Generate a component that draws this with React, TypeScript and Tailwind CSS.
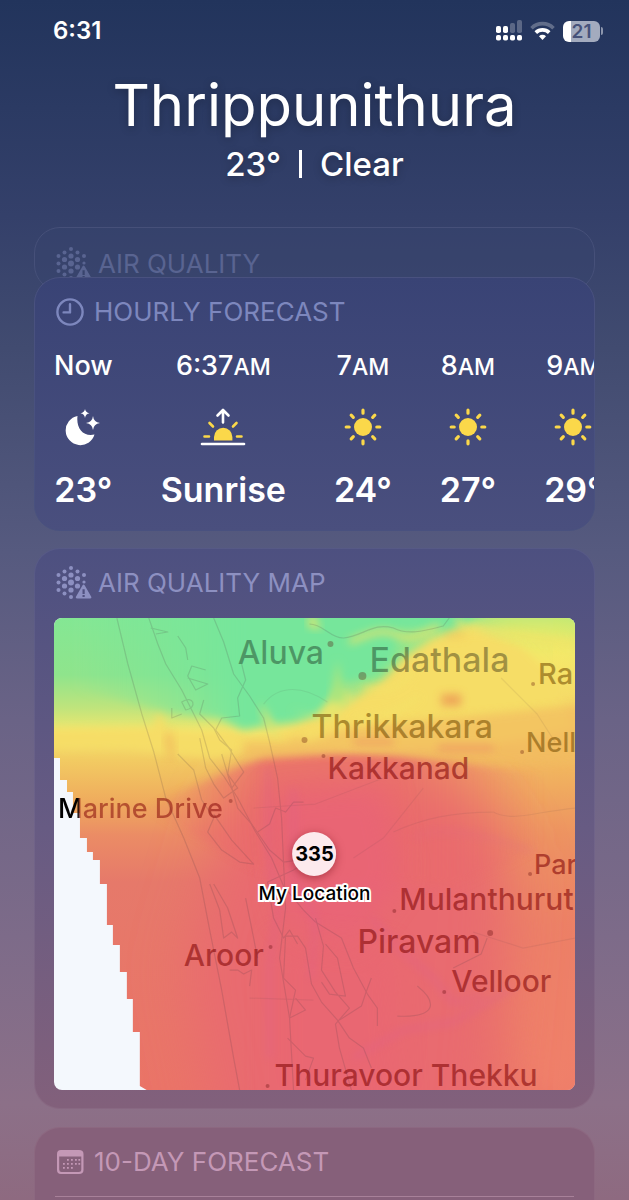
import type { ReactNode } from 'react';

const MAP_W = 522;
const MAP_H = 472;

const green = 'text-black/35';
const yellow = 'text-[#704800]/55';
const red = 'text-[#860a0a]/60';

const places = [
  { name: 'Aluva', x: 184, y: 35, size: 'text-[32px]', tone: green, dot: [277, 26, 3] },
  { name: 'Edathala', x: 316, y: 42, size: 'text-[34px]', tone: green, dot: [309, 58, 4] },
  { name: 'Ra', x: 485, y: 55, size: 'text-[29px]', tone: yellow, dot: [480, 66, 2] },
  { name: 'Thrikkakara', x: 258, y: 109, size: 'text-[32px]', tone: yellow, dot: [251, 122, 3] },
  { name: 'Nell', x: 473, y: 124, size: 'text-[27px]', tone: yellow, dot: [469, 134, 2] },
  { name: 'Kakkanad', x: 274, y: 150, size: 'text-[30px]', tone: red, dot: [270, 138, 2] },
  { name: 'Par', x: 481, y: 246, size: 'text-[27px]', tone: red, dot: [477, 256, 2] },
  { name: 'Mulanthurut', x: 346, y: 281, size: 'text-[30px]', tone: red, dot: [341, 293, 2] },
  { name: 'Piravam', x: 304, y: 324, size: 'text-[32px]', tone: red, dot: [437, 315, 3] },
  { name: 'Aroor', x: 130, y: 337, size: 'text-[30px]', tone: red, dot: [217, 329, 2] },
  { name: 'Velloor', x: 398, y: 363, size: 'text-[30px]', tone: red, dot: [391, 374, 2] },
  { name: 'Thuravoor Thekku', x: 221, y: 457, size: 'text-[30px]', tone: red, dot: [214, 468, 2] },
];

const hours = [
  { time: 'Now', suffix: '', icon: <MoonIcon />, value: '23°' },
  { time: '6:37', suffix: 'AM', icon: <SunriseIcon />, value: 'Sunrise' },
  { time: '7', suffix: 'AM', icon: <SunIcon />, value: '24°' },
  { time: '8', suffix: 'AM', icon: <SunIcon />, value: '27°' },
  { time: '9', suffix: 'AM', icon: <SunIcon />, value: '29°' },
];

export default function App() {
  return (
    <main className="flex min-h-screen flex-col overflow-hidden bg-[linear-gradient(to_bottom,#22345c_0%,#34406a_18%,#414b70_29%,#565a7f_46%,#6a6386_60%,#7d6b89_78%,#8c7088_92%,#8e6a80_100%)] font-['Inter',sans-serif] text-white">
      <StatusBar />

      <header className="flex flex-col items-center pt-1.5 [text-shadow:0_2px_8px_rgba(0,0,0,0.25)]">
        <h1 className="text-[58px] leading-[74px] font-normal">Thrippunithura</h1>
        <p className="flex items-center gap-[18px] text-[33px] leading-[44px] font-medium">
          <span>23°</span>
          <span className="h-7 w-[3px] bg-white" />
          <span>Clear</span>
        </p>
      </header>

      <div className="mt-[41px] flex flex-1 flex-col px-[34px]">
        <section className="h-16 rounded-[26px] border border-[#465079] bg-[#38436f]/40 px-5 pt-[18px] text-[#596491]">
          <CardTitle icon={<AirIcon />} tight>AIR QUALITY</CardTitle>
        </section>

        <section className="relative -mt-[14px] overflow-hidden rounded-[26px] border border-[#49517f] bg-linear-to-b from-[#394375] to-[#4a4f7e] bg-origin-border pl-[19px] pb-[18px]">
          <div className="pt-4 pl-px text-[#7d87bd]">
            <CardTitle icon={<ClockIcon />}>HOURLY FORECAST</CardTitle>
          </div>
          <ul className="mt-5 flex gap-12">
            {hours.map((hour) => (
              <li key={hour.time} className="flex shrink-0 flex-col items-center">
                <span className="text-[27px] leading-8 font-medium">
                  {hour.time}
                  <span className="text-[23px]">{hour.suffix}</span>
                </span>
                <span className="mt-5 flex h-12 items-center">{hour.icon}</span>
                <span className="mt-[17px] text-[34px] leading-[44px] font-semibold">{hour.value}</span>
              </li>
            ))}
          </ul>
        </section>

        <section className="mt-[17px] rounded-[26px] border border-white/5 bg-linear-to-b from-[#4d5080] via-[#675b83] to-[#82607b] bg-origin-border px-[19px] pt-4 pb-[18px]">
          <div className="px-px text-[#8d90c1]">
            <CardTitle icon={<AirIcon />} tight>AIR QUALITY MAP</CardTitle>
          </div>
          <AirQualityMap />
        </section>

        <section className="mt-[18px] flex-1 rounded-t-[26px] border border-b-0 border-white/5 bg-[#86607a] pl-5 pt-4">
          <div className="text-[#c498b6]">
            <CardTitle icon={<CalendarIcon />}>10-DAY FORECAST</CardTitle>
          </div>
          <hr className="mt-4 mr-5 border-[#a88199]" />
        </section>
      </div>
    </main>
  );
}

function CardTitle({ icon, tight, children }: { icon: ReactNode; tight?: boolean; children: ReactNode }) {
  return (
    <h2 className={`flex h-9 items-center text-[26px] leading-8 font-normal ${tight ? 'gap-[6px]' : 'gap-2'}`}>
      {icon}
      {children}
    </h2>
  );
}

function StatusBar() {
  return (
    <div className="flex h-[62px] items-center justify-between pl-[53px] pr-[26px]">
      <span className="text-2xl leading-8 font-semibold">6:31</span>
      <div className="flex items-center gap-2">
        <svg width="26" height="22" viewBox="0 0 26 22" fill="white">
          <rect x="0" y="6" width="5" height="7" rx="1.8" />
          <rect x="7" y="6" width="5" height="7" rx="1.8" />
          <rect x="14" y="3" width="5" height="10" rx="1.8" opacity=".25" />
          <rect x="21" y="0" width="5" height="13" rx="1.8" opacity=".25" />
          <rect x="0" y="15" width="5" height="5.6" rx="1.8" />
          <rect x="7" y="15" width="5" height="5.6" rx="1.8" />
          <rect x="14" y="15" width="5" height="5.6" rx="1.8" />
          <rect x="21" y="15" width="5" height="5.6" rx="1.8" />
        </svg>
        <svg width="25" height="20" viewBox="0 0 25 20" fill="none" stroke="white" strokeWidth="3.6">
          <path d="M1.5 7.2a15.6 15.6 0 0 1 22 0" opacity=".28" />
          <path d="M5.8 11.6a9.5 9.5 0 0 1 13.4 0" />
          <path d="M9 15.2a5 5 0 0 1 7 0l-3.5 3.7z" fill="white" stroke="none" />
        </svg>
        <div className="flex items-center gap-px">
          <div className="flex h-[21px] w-[37px] items-center justify-center rounded-[6px] bg-[linear-gradient(to_right,white_21%,#a3abbe_21%)] text-[19px] leading-none font-semibold text-[#46527a]">
            21
          </div>
          <span className="h-2 w-0.5 rounded-r-full bg-[#8d96ad]" />
        </div>
      </div>
    </div>
  );
}

function AirQualityMap() {
  return (
    <div className="relative mt-[17px] aspect-[522/473] overflow-hidden rounded-lg bg-[#f4f8fd]">
      <svg className="block size-full" viewBox="0 0 522 472" preserveAspectRatio="none">
        <defs>
          <linearGradient id="west" x1="0" y1="0" x2="0" y2="1">
            <stop offset="0" stopColor="#84e794" />
            <stop offset=".12" stopColor="#8fe48c" />
            <stop offset=".19" stopColor="#bfe47c" />
            <stop offset=".245" stopColor="#f5e76c" />
            <stop offset=".3" stopColor="#f2cb62" />
            <stop offset=".39" stopColor="#efab5d" />
            <stop offset=".46" stopColor="#eb8c65" />
            <stop offset=".56" stopColor="#e6796a" />
            <stop offset="1" stopColor="#ea7467" />
          </linearGradient>
          <linearGradient id="east" x1="0" y1="0" x2="0" y2="1">
            <stop offset="0" stopColor="#c9ea6e" />
            <stop offset=".07" stopColor="#f7ea69" />
            <stop offset=".2" stopColor="#f5d666" />
            <stop offset=".32" stopColor="#f1b45e" />
            <stop offset=".45" stopColor="#ed9461" />
            <stop offset=".65" stopColor="#ec8066" />
            <stop offset="1" stopColor="#f0806a" />
          </linearGradient>
          <linearGradient id="clean" x1="0" y1="0" x2="1" y2="0">
            <stop offset="0" stopColor="#76e69b" stopOpacity="0" />
            <stop offset=".4" stopColor="#76e69b" />
          </linearGradient>
          <linearGradient id="ridge" x1="0" y1="0" x2="1" y2="0">
            <stop offset="0" stopColor="#ea6b6c" stopOpacity="0" />
            <stop offset=".3" stopColor="#ea6b6c" />
            <stop offset=".65" stopColor="#ea6b6c" />
            <stop offset="1" stopColor="#ea6b6c" stopOpacity="0" />
          </linearGradient>
          <filter id="soft" x="-20%" y="-20%" width="140%" height="140%">
            <feGaussianBlur stdDeviation="4" />
          </filter>
          <filter id="softer" x="-30%" y="-30%" width="160%" height="160%">
            <feGaussianBlur stdDeviation="14" />
          </filter>
          <filter id="softest" x="-40%" y="-40%" width="180%" height="180%">
            <feGaussianBlur stdDeviation="28" />
          </filter>
          <clipPath id="coverage">
            <path d="M0 0H522V472H93L86 468V414H79V381H73V354H66V327H59V307H53V266H46V242H39V234H33V220H26V195H19V174H13V162H6V140H0Z" />
          </clipPath>
        </defs>

        <g clipPath="url(#coverage)">
          <rect width="522" height="472" fill="url(#west)" />
          <path d="M400 0H600V472H450L430 300L360 140Z" fill="url(#east)" filter="url(#softest)" />
          <path d="M440 0H522V472H480Z" fill="url(#east)" filter="url(#softer)" />
          <rect x="500" width="22" height="472" fill="url(#east)" opacity=".5" />

          {/* unhealthy zone around the backwaters */}
          <path d="M180 185L220 165L330 165L410 175L455 240L450 340L430 540H170L130 350Z" fill="#e96a70" filter="url(#softest)" />
          <path d="M90 190L170 155L210 138L280 134L340 136L490 156L490 230L400 270L200 250Z" fill="url(#ridge)" filter="url(#soft)" opacity=".85" />
          <path d="M215 175L330 165L350 260L300 330L230 300Z" fill="#e9627a" filter="url(#softer)" opacity=".6" />
          <path d="M220 320L340 330L350 520H220Z" fill="#ea6474" filter="url(#softer)" opacity=".4" />

          {/* moderate band */}
          <path d="M-10 112L100 110L106 90L112 112L150 114L175 112L200 120L230 112L260 100L290 88L330 62L350 40L380 20L420 8L470 30L500 60L520 110L430 128L320 128L250 128L190 132L160 140L120 136L70 128L-10 130Z" fill="#f6dd66" filter="url(#soft)" />
          <path d="M110 122L116 110L122 130L118 150Z" fill="#f0b45c" filter="url(#soft)" opacity=".6" />
          <path d="M190 124L230 124L245 118L255 124L300 108L400 100L530 86V146L420 142L300 134L190 142Z" fill="#f2bb60" filter="url(#soft)" opacity=".7" />

          {/* clean air to the north */}
          <path d="M20 -10H440L395 12L345 10L340 40L320 58L285 66L268 96L240 104L208 108L190 112L165 100L120 96L20 70Z" fill="url(#clean)" filter="url(#soft)" />
          <path d="M206 84L218 102L226 122L212 108Z" fill="#d9e472" filter="url(#soft)" />
          <path d="M258 -6L268 12L254 8Z" fill="#e0e670" filter="url(#soft)" />
          <path d="M236 92L262 98L284 76L300 78L276 104Z" fill="#e8e56c" filter="url(#soft)" />
          <path d="M284 42L292 84L276 84Z" fill="#a9e57e" filter="url(#soft)" />

          <g fill="none" stroke="#f5e268" strokeWidth="5" filter="url(#soft)" opacity=".9">
            <path d="M296 24C320 14 330 10 346 18C362 24 374 12 386 8" />
            <path d="M310 70C330 76 350 70 360 52" />
            <path d="M404 0L410 12C430 8 470 20 522 26" />
            <path d="M300 102C330 98 350 92 366 78" />
          </g>
          <g filter="url(#soft)" opacity=".8">
            <rect x="388" y="76" width="20" height="12" fill="#ec9a55" />
            <path d="M300 122H340V126H300ZM385 128H440V132H385Z" fill="#ec8563" />
            <path d="M392 14H412V20H392Z" fill="#f2c85e" />
          </g>
          <g fill="none" stroke="#dc5f93" strokeWidth="4" filter="url(#soft)" opacity=".45">
            <path d="M214 150V230L224 290L216 350V440" />
            <path d="M318 300L345 330L380 360L400 385L430 378" />
            <path d="M300 440L350 412L400 404L460 370" />
            <path d="M240 170V260L262 300L258 360" />
            <path d="M360 220C380 208 430 214 480 234" opacity=".5" />
          </g>

          {/* coastline, backwaters and roads */}
          <g fill="none" stroke="#4d3a45" strokeWidth="1.2" strokeLinejoin="round" opacity=".17">
            <path d="M63 0L74 46L88 96L100 134L112 180L130 220L146 260L156 312L168 372L180 440L186 472" />
            <path d="M95 0L104 26L112 46L128 72L138 92L148 112L156 140L170 158L184 180L202 214L218 240L230 268L250 292L262 304" />
            <path d="M97 10L114 14L102 16M124 18L132 30L134 42M152 52L138 48L134 58L142 72L154 66L134 60M118 90V100L128 96M128 84C140 76 144 90 132 92Z" />
            <path d="M150 82L146 96L160 110L166 122L178 132L174 156L184 170L170 180L160 166L152 150L146 120" />
            <path d="M188 46L192 62L184 80L186 98L168 100L162 112L174 128L190 154L178 170" />
            <path d="M160 0L170 24L180 56L196 78L210 100L216 124L224 160L228 200L232 290L226 340L236 400L240 472" />
            <path d="M124 136L140 152L148 182L160 200L154 214L168 232L186 244L200 246L178 222L160 196" />
            <path d="M168 136L184 190L198 206L216 232L230 244L258 240L240 252L214 264L220 300L230 320L236 312L244 326" />
            <path d="M156 266L166 292L170 320L178 314L184 320L174 290L160 266M192 280L200 320L204 340M176 352H184L190 356L198 352L196 368" />
            <path d="M204 214L216 206L222 190L232 194L240 184H250" />
            <path d="M232 318L244 318L252 330L258 366L268 384L284 402L296 420L310 430L318 450M232 318L230 360L242 372L236 400L252 392L242 380M234 420L252 438L260 440L252 462" />
            <path d="M262 300L270 328L268 352L282 374L296 390L282 406L286 430L298 472M272 326L284 340L292 378L276 376L268 364M262 304L288 320L300 350L314 376L324 390V408" />
            <path d="M318 360L312 376L308 388L286 402M364 368C384 384 384 400 344 398M400 350L428 336L434 320" />
            <path d="M256 6C270 6 276 20 290 20C310 18 320 4 340 10C356 18 374 12 390 8L396 0" />
            <g opacity=".5">
              <path d="M210 86C226 66 250 68 274 84M340 214C370 200 400 194 440 194C460 204 480 194 522 190M448 60L484 96L502 124" />
              <path d="M196 380L260 382M200 190L262 186L330 160M300 240L330 220L370 170M420 314L470 330L522 320" />
            </g>
          </g>
        </g>

        <g fill="#500" opacity=".3">
          {places.map(({ name, dot }) => (
            <circle key={name} cx={dot[0]} cy={dot[1]} r={dot[2]} />
          ))}
          <circle cx="177" cy="183" r="2" />
        </g>
      </svg>

      {places.map((place) => (
        <span
          key={place.name}
          className={`absolute -translate-y-1/2 leading-none font-medium whitespace-nowrap ${place.tone} ${place.size}`}
          style={{ left: `${(place.x / MAP_W) * 100}%`, top: `${(place.y / MAP_H) * 100}%` }}
        >
          {place.name}
        </span>
      ))}
      {/* the first letter hangs over the area without data */}
      <span className="absolute top-[37%] left-1 bg-[linear-gradient(to_right,black_20px,rgba(134,10,10,0.55)_22px)] bg-clip-text text-[27px] leading-8 font-medium whitespace-nowrap text-transparent">
        Marine Drive
      </span>

      <div className="absolute top-1/2 left-1/2 flex -translate-x-1/2 -translate-y-[22px] flex-col items-center">
        <span className="flex size-11 items-center justify-center rounded-full bg-[#fdeaed] text-[20px] leading-none font-bold text-black shadow-[0_2px_8px_rgba(120,20,30,0.5)]">
          335
        </span>
        <span className="mt-1 text-[19px] leading-7 font-medium whitespace-nowrap text-black [paint-order:stroke_fill] [-webkit-text-stroke:4px_white]">
          My Location
        </span>
      </div>
    </div>
  );
}

function AirIcon() {
  const dots = [
    [16, 3, 2], [9.5, 6.5, 2], [22.5, 6.5, 2], [3.5, 10, 2], [16, 10, 2.6], [29, 10, 2],
    [9.5, 13.5, 2.6], [22.5, 13.5, 2.6], [3.5, 17.5, 2], [16, 17.5, 3], [29, 17, 1.6],
    [9.5, 21, 2.6], [22.5, 21, 2.6], [3.5, 25, 2], [16, 25, 2.6], [9.5, 28.5, 2], [16, 32, 2],
  ];
  return (
    <svg width="37" height="36" viewBox="0 0 37 36" fill="currentColor">
      {dots.map(([x, y, r]) => (
        <circle key={`${x}-${y}`} cx={x} cy={y} r={r} />
      ))}
      <path
        fillRule="evenodd"
        d="M27.4 20.6q1.2-2 2.4 0l6.3 11q1 1.9-1.2 1.9H22.3q-2.2 0-1.2-1.9zM27.5 24.2v4.8h2.2v-4.8zM27.5 30v2h2.2v-2z"
      />
    </svg>
  );
}

function ClockIcon() {
  return (
    <svg width="31" height="30" viewBox="0 0 31 30" fill="none" stroke="currentColor" strokeWidth="2.4" strokeLinecap="round" strokeLinejoin="round">
      <circle cx="15" cy="15" r="12.6" />
      <path d="M15 7.2V15.4H8.6" />
    </svg>
  );
}

function CalendarIcon() {
  return (
    <svg width="31" height="28" viewBox="0 0 31 28" fill="currentColor">
      <path fillRule="evenodd" d="M6 2H24Q28.5 2 28.5 6V22Q28.5 26 24 26H6Q2 26 2 22V6Q2 2 6 2ZM4.2 8.5V21.5Q4.2 24 6.5 24H23.7Q26.3 24 26.3 21.5V8.5Z" />
      <path d="M12 11h1.8v1.8h-1.8zM16 11h1.8v1.8h-1.8zM20 11h1.8v1.8h-1.8zM23.4 11h1.8v1.8h-1.8zM8 15h1.8v1.8h-1.8zM12 15h1.8v1.8h-1.8zM16 15h1.8v1.8h-1.8zM20 15h1.8v1.8h-1.8zM23.4 15h1.8v1.8h-1.8zM8 19h1.8v1.8h-1.8zM12 19h1.8v1.8h-1.8zM16 19h1.8v1.8h-1.8z" />
    </svg>
  );
}

function MoonIcon() {
  return (
    <svg width="36" height="38" viewBox="0 0 36 38" fill="white">
      <path d="M12.5 8C11 20 18 29 29.5 26.5A14.7 14.7 0 1 1 12.5 8Z" />
      <path d="M28 8Q28.6 14 35 15Q28.6 16 28 22Q27.4 16 21 15Q27.4 14 28 8Z" />
      <path d="M20 1Q20.5 4.6 24.5 5.2Q20.5 5.8 20 10Q19.5 5.8 15.5 5.2Q19.5 4.6 20 1Z" />
    </svg>
  );
}

function SunriseIcon() {
  return (
    <svg width="46" height="38" viewBox="0 0 46 38" fill="none" strokeLinecap="round" strokeLinejoin="round">
      <path d="M14 32.5V29a9.2 9.2 0 0 1 18.4 0V32.5Z" fill="#fbd84a" />
      <path d="M4.5 28.5H9M37 28.5H41.5M9.5 15L13 18.5M36.5 15L33 18.5" stroke="#fbd84a" strokeWidth="2.6" />
      <path d="M23 14.5V3M17.5 7.5L23 2L28.5 7.5" stroke="white" strokeWidth="2.6" />
      <path d="M2 36H44" stroke="white" strokeWidth="2.6" />
    </svg>
  );
}

function SunIcon() {
  return (
    <svg width="38" height="38" viewBox="0 0 38 38" stroke="#fbd84a" strokeWidth="3.2" strokeLinecap="round">
      <circle cx="19" cy="19" r="9" fill="#fbd84a" stroke="none" />
      <path d="M19 2.2V5.2M19 32.8V35.8M2.2 19H5.2M32.8 19H35.8M7.2 7.2L9.3 9.3M28.7 28.7L30.8 30.8M7.2 30.8L9.3 28.7M28.7 9.3L30.8 7.2" />
    </svg>
  );
}
